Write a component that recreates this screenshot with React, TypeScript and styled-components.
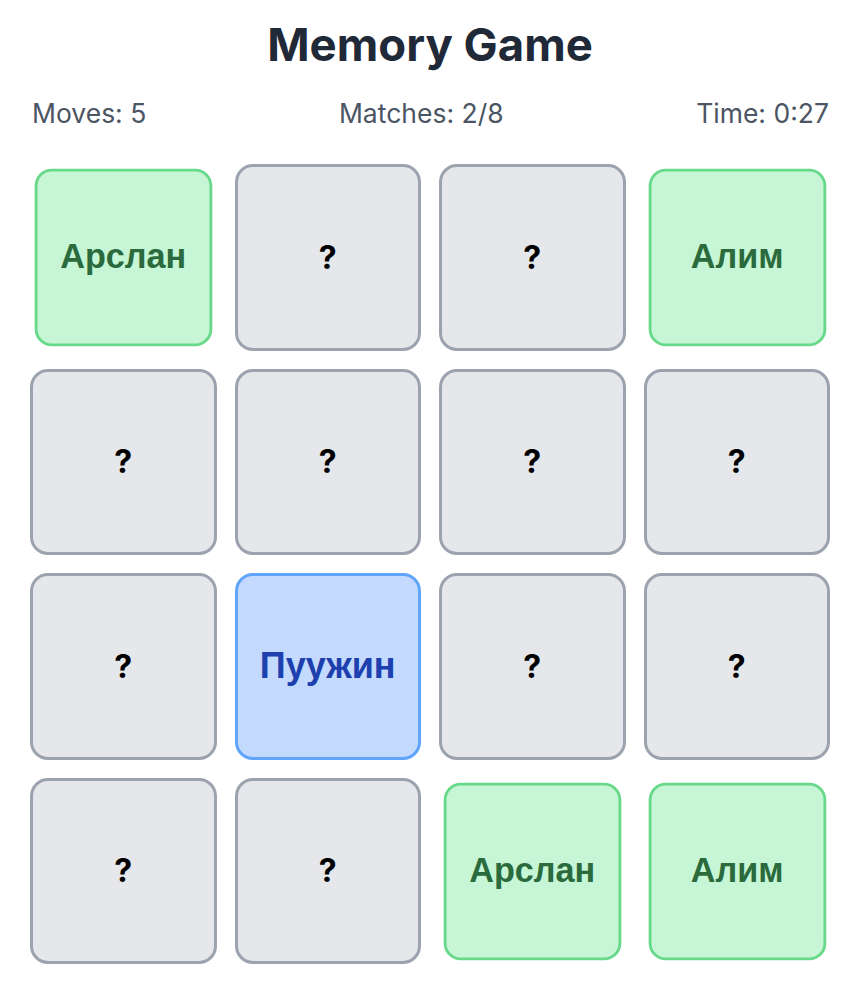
import React from 'react'
import styled, { createGlobalStyle } from 'styled-components'

type CardState = 'hidden' | 'flipped' | 'matched'

interface CardData {
  name: string
  state: CardState
}

const cards: CardData[] = [
  { name: 'Арслан', state: 'matched' },
  { name: 'Пуужин', state: 'hidden' },
  { name: 'Алим', state: 'hidden' },
  { name: 'Алим', state: 'matched' },
  { name: 'Бат', state: 'hidden' },
  { name: 'Сүрэн', state: 'hidden' },
  { name: 'Бат', state: 'hidden' },
  { name: 'Сүрэн', state: 'hidden' },
  { name: 'Дорж', state: 'hidden' },
  { name: 'Пуужин', state: 'flipped' },
  { name: 'Дорж', state: 'hidden' },
  { name: 'Номин', state: 'hidden' },
  { name: 'Номин', state: 'hidden' },
  { name: 'Арслан', state: 'hidden' },
  { name: 'Арслан', state: 'matched' },
  { name: 'Алим', state: 'matched' },
]

export default function App() {
  return (
    <>
      <GlobalStyle />
      <Page>
        <Title>Memory Game</Title>
        <Stats>
          <Stat>Moves: 5</Stat>
          <Stat>Matches: 2/8</Stat>
          <Stat>Time: 0:27</Stat>
        </Stats>
        <Board>
          {cards.map((card, i) => (
            <Card key={i} state={card.state}>
              {card.state === 'hidden' ? '?' : card.name}
            </Card>
          ))}
        </Board>
      </Page>
    </>
  )
}

const GlobalStyle = createGlobalStyle`
  body {
    margin: 0;
    background: #ffffff;
    font-family: Inter, "Noto Sans", sans-serif;
  }
`

const Page = styled.div`
  width: 800px;
  margin-left: 30px;
  padding-top: 16px;
`

const Title = styled.h1`
  margin: 0;
  text-align: center;
  font-size: 45.5px;
  line-height: 58px;
  font-weight: 700;
  color: #1f2937;
`

const Stats = styled.div`
  display: flex;
  justify-content: space-between;
  margin-top: 22px;
  padding: 0 1px 0 2px;
  font-size: 26.5px;
  line-height: 34px;
  color: #4b5563;
`

const Stat = styled.span``

const Board = styled.div`
  display: grid;
  grid-template-columns: repeat(4, 1fr);
  gap: 18px;
  margin-top: 34px;
`

const Card = styled.div<{ state: CardState }>`
  aspect-ratio: 1 / 1;
  box-sizing: border-box;
  border-radius: 18px;
  border: 3.5px solid
    ${p => (p.state === 'matched' ? '#68d98a' : p.state === 'flipped' ? '#60a5fa' : '#9ca3af')};
  background: ${p => (p.state === 'matched' ? '#c6f6d5' : p.state === 'flipped' ? '#c3dafe' : '#e5e7eb')};
  color: ${p => (p.state === 'matched' ? '#2a6a3c' : p.state === 'flipped' ? '#1e40af' : '#000000')};
  transform: ${p => (p.state === 'matched' ? 'scale(0.95)' : 'none')};
  display: flex;
  align-items: center;
  justify-content: center;
  font-family: ${p => (p.state === 'hidden' ? 'Inter, sans-serif' : '"Liberation Sans", Arial, sans-serif')};
  font-size: ${p => (p.state === 'hidden' ? '32px' : '36px')};
  font-weight: 700;
`
